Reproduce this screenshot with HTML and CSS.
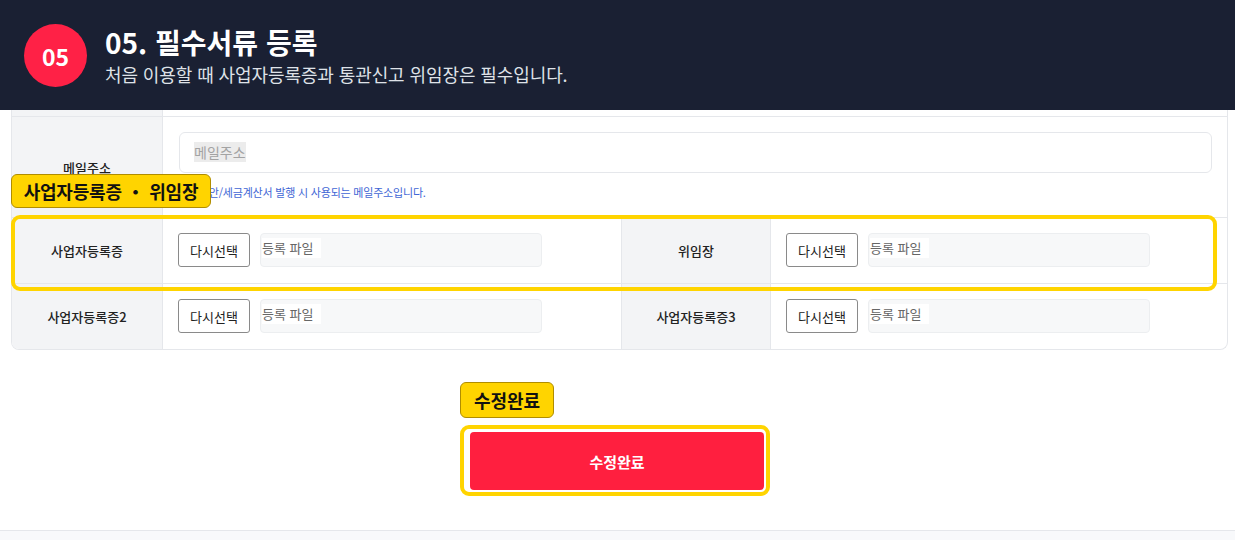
FILE: index.html
```html
<!DOCTYPE html>
<html lang="ko">
<head>
<meta charset="utf-8">
<title>05. 필수서류 등록</title>
<link rel="stylesheet" href="styles.css">
</head>
<body>
<header class="hero">
  <div class="step">05</div>
  <div class="hero-text">
    <h1 class="hero-title">05. 필수서류 등록</h1>
    <p class="hero-sub">처음 이용할 때 사업자등록증과 통관신고 위임장은 필수입니다.</p>
  </div>
</header>

<main class="content">
  <div class="card">
    <div class="row row-remnant">
      <div class="label"></div>
      <div class="cell"></div>
    </div>
    <div class="row row-email">
      <div class="label">메일주소</div>
      <div class="cell cell-email">
        <div class="text-input"><span class="placeholder">메일주소</span></div>
        <p class="hint">거래제안/세금계산서 발행 시 사용되는 메일주소입니다.</p>
      </div>
    </div>
    <div class="row row-files">
      <div class="label">사업자등록증</div>
      <div class="cell cell-file">
        <button class="btn-select" type="button">다시선택</button>
        <div class="file-field"><span class="file-name">등록 파일</span></div>
      </div>
      <div class="label label-mid">위임장</div>
      <div class="cell cell-file">
        <button class="btn-select" type="button">다시선택</button>
        <div class="file-field"><span class="file-name">등록 파일</span></div>
      </div>
    </div>
    <div class="row row-files row-last">
      <div class="label">사업자등록증2</div>
      <div class="cell cell-file">
        <button class="btn-select" type="button">다시선택</button>
        <div class="file-field"><span class="file-name">등록 파일</span></div>
      </div>
      <div class="label label-mid">사업자등록증3</div>
      <div class="cell cell-file">
        <button class="btn-select" type="button">다시선택</button>
        <div class="file-field"><span class="file-name">등록 파일</span></div>
      </div>
    </div>
  </div>

  <div class="tag tag-docs">사업자등록증 ・ 위임장</div>
  <div class="highlight-row"></div>

  <div class="submit-area">
    <div class="tag tag-submit">수정완료</div>
    <div class="submit-frame">
      <button class="btn-submit" type="button">수정완료</button>
    </div>
  </div>
</main>

<footer class="page-foot"></footer>
</body>
</html>
```

FILE: styles.css
```css
* { box-sizing: border-box; }

html, body {
  margin: 0;
  padding: 0;
  height: 540px;
  overflow: hidden;
  background: #ffffff;
  font-family: "Noto Sans CJK KR", "Noto Sans", sans-serif;
  color: #222;
}

.hero {
  height: 110px;
  background: #1a2033;
  display: flex;
  align-items: flex-start;
  padding-left: 24px;
}

.step {
  width: 63px;
  height: 63px;
  margin-top: 24px;
  border-radius: 50%;
  background: #ff2146;
  color: #fff;
  font-weight: 700;
  font-size: 23px;
  display: flex;
  align-items: center;
  justify-content: center;
}

.hero-text {
  margin-left: 18px;
  margin-top: 26px;
}

.hero-title {
  margin: 0;
  font-size: 28px;
  line-height: 36px;
  font-weight: 700;
  color: #ffffff;
  margin-top: -2px;
}

.hero-sub {
  margin: 2px 0 0;
  font-size: 18px;
  line-height: 24px;
  color: #dfe2e8;
  letter-spacing: -0.1px;
}

.content {
  position: relative;
  padding: 0 7px 0 11px;
}

.card {
  border: 1px solid #e5e7eb;
  border-top: none;
  border-radius: 0 0 8px 8px;
  overflow: hidden;
}

.row {
  display: grid;
  grid-template-columns: 151px 1fr;
  border-bottom: 1px solid #e5e7eb;
}

.row-last { border-bottom: none; }

.row-remnant { height: 7px; }

.row-email { height: 101px; }

.row-files {
  grid-template-columns: 151px 458px 150px 1fr;
  height: 66px;
}

.row-last { height: 65px; }

.label {
  background: #f3f4f6;
  border-right: 1px solid #e5e7eb;
  display: flex;
  align-items: center;
  justify-content: center;
  font-size: 13px;
  font-weight: 500;
  color: #222;
}

.label-mid {
  border-left: 1px solid #e5e7eb;
}

.cell-email {
  padding: 15px 15px 0 16px;
}

.text-input {
  height: 41px;
  border: 1px solid #e5e7eb;
  border-radius: 6px;
  padding: 0 14px;
  display: flex;
  align-items: center;
}

.placeholder {
  font-size: 14px;
  color: #a3a3a3;
  background: #ececec;
  line-height: 20px;
  margin-top: -2px;
}

.hint {
  margin: 11px 0 0;
  font-size: 11px;
  line-height: 16px;
  color: #4166d5;
  letter-spacing: -0.2px;
}

.cell-file {
  display: flex;
  align-items: flex-start;
  padding: 15px 0 0 15px;
  gap: 10px;
}

.btn-select {
  width: 72px;
  height: 34px;
  background: #fff;
  border: 1px solid #8a8a8a;
  border-radius: 3px;
  font-family: inherit;
  font-size: 13px;
  color: #222;
  padding: 0;
}

.file-field {
  width: 282px;
  height: 34px;
  background: #f7f8f9;
  border: 1px solid #eceef0;
  border-radius: 4px;
  padding: 0 0 0 1px;
}

.file-name {
  display: inline-block;
  background: #fff;
  font-size: 13px;
  line-height: 20px;
  padding-right: 8px;
  color: #666;
  margin-top: -1px;
}

.tag {
  background: #ffd400;
  border: 1px solid #b08d00;
  border-radius: 6px;
  font-weight: 700;
  font-size: 18px;
  color: #111;
  display: flex;
  align-items: center;
  justify-content: center;
}

.tag-docs {
  position: absolute;
  left: 11px;
  top: 64px;
  width: 200px;
  height: 34px;
  font-size: 18px;
  letter-spacing: -0.2px;
}

.highlight-row {
  position: absolute;
  left: 11px;
  top: 105px;
  width: 1206px;
  height: 76px;
  border: 4px solid #ffd400;
  border-radius: 9px;
}

.submit-area {
  width: 310px;
  margin: 32px 0 0 449px;
  display: flex;
  flex-direction: column;
  align-items: flex-start;
  gap: 7px;
}

.tag-submit {
  width: 94px;
  height: 36px;
}

.submit-frame {
  width: 310px;
  height: 71px;
  border: 4px solid #ffd400;
  border-radius: 9px;
  padding: 3px 2px 2px 6px;
  background: #fff;
}

.btn-submit {
  width: 100%;
  height: 100%;
  border: none;
  border-radius: 4px;
  background: #ff1f3f;
  color: #fff;
  font-family: inherit;
  font-weight: 700;
  font-size: 15px;
}

.page-foot {
  margin-top: 34px;
  height: 20px;
  border-top: 1px solid #e5e7eb;
  background: #f8f9fb;
}
```
